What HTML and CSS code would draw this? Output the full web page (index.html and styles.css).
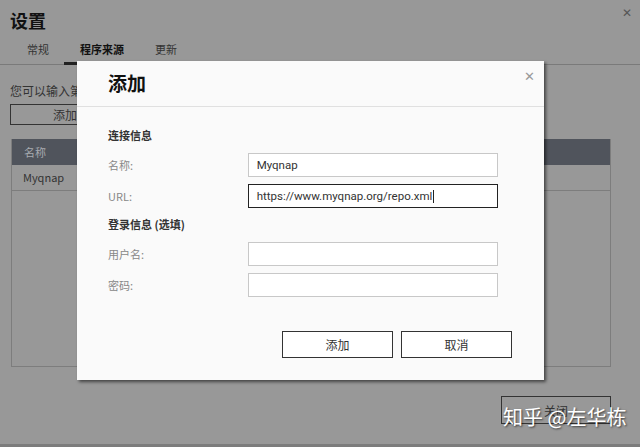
FILE: index.html
```html
<!DOCTYPE html>
<html>
<head>
	<meta charset="utf-8">
	<meta name="viewport" content="width=device-width, initial-scale=1">
	<link rel="stylesheet" href="styles.css">
</head>
<body>
	<div class="page">
		<div class="page-head">
			<h1>设置</h1>
			<span class="page-close">&#x2715;</span>
		</div>
		<div class="tabs">
			<span class="tab">常规</span>
			<span class="tab tab-active">程序来源</span>
			<span class="tab">更新</span>
		</div>
		<div class="content">
			<p class="hint">您可以输入第三方</p>
			<button class="btn-outline">添加</button>
			<div class="table">
				<div class="table-head">名称</div>
				<div class="table-row">Myqnap</div>
			</div>
			<div class="footer">
				<button class="btn-outline btn-close">关闭</button>
			</div>
		</div>
	</div>

	<div class="dialog">
		<div class="dialog-head">
			<h2>添加</h2>
			<span class="dialog-close">&#x2715;</span>
		</div>
		<div class="dialog-body">
			<div class="section">连接信息</div>
			<div class="field">
				<label>名称:</label>
				<div class="input">Myqnap</div>
			</div>
			<div class="field">
				<label>URL:</label>
				<div class="input input-focus">https://www.myqnap.org/repo.xml<span class="caret"></span></div>
			</div>
			<div class="section">登录信息 (选填)</div>
			<div class="field">
				<label>用户名:</label>
				<div class="input"></div>
			</div>
			<div class="field">
				<label>密码:</label>
				<div class="input"></div>
			</div>
			<div class="actions">
				<button class="btn">添加</button>
				<button class="btn">取消</button>
			</div>
		</div>
	</div>

	<div class="watermark">知乎 @左华栋</div>
</body>
</html>
```

FILE: styles.css
```css
body {
	margin: 0;
	background-color: #989898;
	font-family: "Noto Sans CJK SC", "Noto Sans", sans-serif;
	color: #222;
	width: 640px;
	height: 447px;
	overflow: hidden;
	position: relative;
}

.page {
	height: 444px;
	border-bottom: 3px solid #7c7c7c;
	box-sizing: content-box;
}

.page-head {
	display: flex;
	justify-content: space-between;
	align-items: center;
	padding: 6px 8px 0 10px;
	height: 28px;
}

.page-head h1 {
	margin: 0;
	font-size: 18px;
	font-weight: bold;
	color: #111;
}

.page-close {
	font-size: 12px;
	color: #555;
	margin-top: -18px;
}

.tabs {
	display: flex;
	padding-left: 20px;
	border-bottom: 1px solid #7a7a7a;
	margin-top: 3px;
}

.tab {
	padding: 4px 7px 5px 7px;
	margin-right: 17px;
	font-size: 11px;
	color: #333;
	border-bottom: 3px solid transparent;
	margin-bottom: -1px;
}

.tab-active {
	font-weight: bold;
	color: #111;
	border-bottom-color: #222;
	padding-left: 16px;
	padding-right: 16px;
	margin-left: -9px;
	margin-right: 8px;
}

.content {
	padding: 0 29px 0 10px;
}

.hint {
	margin: 17px 0 5px 0;
	font-size: 12px;
	color: #333;
}

.btn-outline {
	display: block;
	width: 110px;
	height: 21px;
	border: 1px solid #333;
	background: transparent;
	font-family: inherit;
	font-size: 12px;
	color: #333;
	padding: 0;
}

.table {
	margin: 14px 0 0 1px;
	height: 227px;
	border: 1px solid #7d7d7d;
	border-top: none;
}

.table-head {
	height: 26px;
	line-height: 26px;
	background-color: #50545c;
	color: #a8abb0;
	font-size: 11px;
	padding-left: 12px;
}

.table-row {
	height: 25px;
	line-height: 25px;
	border-bottom: 1px solid #7d7d7d;
	font-size: 11px;
	color: #333;
	padding-left: 11px;
}

.footer {
	display: flex;
	justify-content: flex-end;
	margin-top: 29px;
}

.btn-close {
	height: 28px;
}

.dialog {
	position: absolute;
	left: 77px;
	top: 61px;
	width: 467px;
	height: 319px;
	background-color: #fafafa;
	box-shadow: 2px 2px 3px rgba(0, 0, 0, 0.55);
}

.dialog-head {
	display: flex;
	justify-content: space-between;
	align-items: flex-start;
	height: 45px;
	border-bottom: 1px solid #e0e0e0;
	padding: 0 9px 0 31px;
}

.dialog-head h2 {
	margin: 8px 0 0 0;
	font-size: 19px;
	font-weight: bold;
	color: #111;
}

.dialog-close {
	font-size: 13px;
	color: #999;
	margin-top: 5px;
}

.dialog-body {
	padding: 20px 46px 0 31px;
}

.section {
	font-size: 11px;
	font-weight: bold;
	color: #333;
	height: 16px;
	line-height: 16px;
	margin-bottom: 10px;
}

.field {
	display: flex;
	align-items: center;
	margin-bottom: 7px;
}

.field + .section {
	margin-top: 8px;
	margin-bottom: 10px;
}

.field label {
	width: 140px;
	font-size: 11px;
	color: #888;
}

.input {
	height: 22px;
	line-height: 22px;
	border: 1px solid #c8c8c8;
	background-color: #fff;
	font-family: "Roboto", "Noto Sans", sans-serif;
	font-size: 11.5px;
	color: #333;
	padding-left: 8px;
	box-sizing: content-box;
	width: 241px;
}

.input-focus {
	border-color: #222;
}

.caret {
	display: inline-block;
	width: 1px;
	height: 13px;
	background-color: #222;
	vertical-align: middle;
	margin-left: 1px;
}

.actions {
	display: flex;
	justify-content: flex-end;
	gap: 8px;
	margin-top: 34px;
	margin-right: -14px;
}

.btn {
	width: 111px;
	height: 27px;
	border: 1px solid #333;
	background-color: #fff;
	font-family: inherit;
	font-size: 12px;
	color: #333;
	padding: 0;
}

.watermark {
	position: absolute;
	left: 503px;
	top: 402px;
	font-size: 20px;
	color: #fff;
	text-shadow: 1px 1px 2px rgba(0, 0, 0, 0.6);
}
```
